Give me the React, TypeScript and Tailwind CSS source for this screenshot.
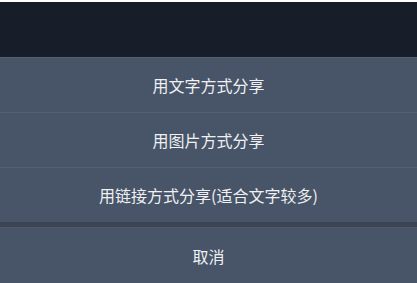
const options = ['用文字方式分享', '用图片方式分享', '用链接方式分享(适合文字较多)'];

export default function App() {
  return (
    <div
      className="w-[417px] h-[283px] flex flex-col bg-white overflow-hidden pt-[2px]"
      style={{ fontFamily: '"Noto Sans CJK SC", "Noto Sans", sans-serif' }}
    >
      {/* Dimmed backdrop */}
      <div className="h-[55px] bg-[#181e29]" />

      {/* Action sheet */}
      <div className="flex flex-col bg-[#485467]">
        {options.map((label) => (
          <button
            key={label}
            className="h-[55px] border-t border-[#556173] flex items-center justify-center text-[16px] text-[#eef0f3]"
          >
            {label}
          </button>
        ))}
        <div className="h-[5px] bg-[#3a4452]" />
        <button className="h-[56px] border-t border-[#4e596b] flex items-center justify-center text-[16px] text-[#eef0f3]">
          取消
        </button>
      </div>
    </div>
  );
}
